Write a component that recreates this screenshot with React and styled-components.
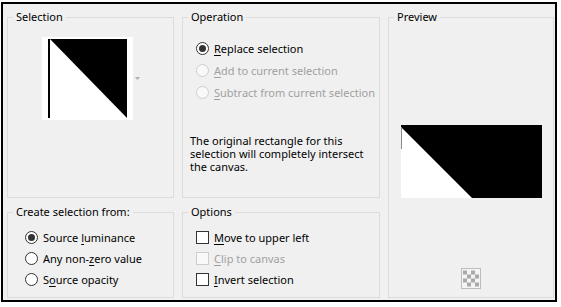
import React from "react";
import styled, { createGlobalStyle } from "styled-components";

const GlobalStyle = createGlobalStyle`
  html, body {
    margin: 0;
    padding: 0;
    background: #fff;
  }
  body {
    font-family: "Segoe UI", "Noto Sans", sans-serif;
    font-size: 11px;
    color: #000;
  }
`;

export const Dialog = styled.div`
  box-sizing: border-box;
  width: 556px;
  height: 300px;
  margin: 2px 0 0 1px;
  padding: 5px 2px 0 4px;
  border: 2px solid #000;
  background: #f0f0f0;
  display: grid;
  grid-template-columns: 167px 198px 166px;
  grid-template-rows: 189px 94px;
  column-gap: 8px;
  row-gap: 6px;
`;

export const Group = styled.fieldset`
  margin: 0;
  padding: 0;
  min-width: 0;
  border: 1px solid #dcdcdc;
  display: flex;
  flex-direction: column;
  grid-column: ${(p) => p.$col};
  grid-row: ${(p) => p.$row};
`;

export const Legend = styled.legend`
  margin-left: 5px;
  padding: 0 3px;
  line-height: 16px;
`;

export const ThumbRow = styled.div`
  display: flex;
  align-items: center;
  padding: 12px 0 0 34px;
`;

export const Thumb = styled.div`
  width: 79px;
  height: 79px;
  padding: 2px 6px;
  background: #fff;
  display: flex;
`;

export const DropArrow = styled.svg`
  margin-left: 2px;
  width: 5px;
  height: 3px;
`;

export const List = styled.div`
  display: flex;
  flex-direction: column;
  padding: ${(p) => p.$pad};
`;

export const Row = styled.label`
  display: flex;
  align-items: center;
  gap: 5px;
  height: ${(p) => p.$h}px;
  color: ${(p) => (p.$disabled ? "#a0a0a0" : "#000")};
  white-space: nowrap;
`;

export const Radio = styled.span`
  box-sizing: border-box;
  width: 13px;
  height: 13px;
  border-radius: 50%;
  border: 1px solid ${(p) => (p.$disabled ? "#cdcdcd" : "#333")};
  background: ${(p) => (p.$disabled ? "#f9f9f9" : "#fff")};
  display: flex;
  align-items: center;
  justify-content: center;
  flex: none;

  &::after {
    content: "";
    display: ${(p) => (p.$checked ? "block" : "none")};
    width: 7px;
    height: 7px;
    border-radius: 50%;
    background: #333;
  }
`;

export const Check = styled.span`
  box-sizing: border-box;
  width: 13px;
  height: 13px;
  border: 1px solid ${(p) => (p.$disabled ? "#cdcdcd" : "#333")};
  background: ${(p) => (p.$disabled ? "#f9f9f9" : "#fff")};
  flex: none;
`;

export const Key = styled.span`
  text-decoration: underline;
  text-underline-offset: 2px;
`;

export const Note = styled.p`
  margin: 31px 0 0 7px;
  line-height: 13px;
  white-space: nowrap;
`;

export const PreviewBody = styled.div`
  flex: 1;
  display: flex;
  flex-direction: column;
  align-items: center;
  padding-bottom: 8px;
`;

export const PreviewImage = styled.svg`
  margin-top: 100px;
  width: 141px;
  height: 73px;
  display: block;
`;

export const CheckerButton = styled.svg`
  margin-top: auto;
  width: 20px;
  height: 21px;
  display: block;
`;

const label = (text, key) => {
  const i = text.indexOf(key);
  return (
    <span>
      {text.slice(0, i)}
      <Key>{key}</Key>
      {text.slice(i + key.length)}
    </span>
  );
};

const Checker = () => {
  const cells = [];
  for (let r = 0; r < 4; r++)
    for (let c = 0; c < 4; c++)
      if ((r + c) % 2 === 0)
        cells.push(<rect key={r + "-" + c} x={2 + c * 4} y={2.5 + r * 4} width="4" height="4" fill="#a9a9a9" />);
  return (
    <CheckerButton viewBox="0 0 20 21">
      <rect x="0.5" y="0.5" width="19" height="20" fill="#f4f4f4" stroke="#bcbcbc" />
      {cells}
    </CheckerButton>
  );
};

export default function App() {
  return (
    <>
      <GlobalStyle />
      <Dialog>
        <Group $col="1" $row="1">
          <Legend>Selection</Legend>
          <ThumbRow>
            <Thumb>
              <svg width="79" height="79" viewBox="0 0 79 79">
                <rect width="79" height="79" fill="#fff" />
                <rect x="0" y="0" width="2" height="79" fill="#000" />
                <polygon points="2,0 79,0 79,79" fill="#000" />
              </svg>
            </Thumb>
            <DropArrow viewBox="0 0 5 3">
              <polygon points="0,0 5,0 2.5,3" fill="#b0b0b0" />
            </DropArrow>
          </ThumbRow>
        </Group>

        <Group $col="2" $row="1">
          <Legend>Operation</Legend>
          <List $pad="12px 0 0 13px">
            <Row $h={22}>
              <Radio $checked />
              {label("Replace selection", "R")}
            </Row>
            <Row $h={22} $disabled>
              <Radio $disabled />
              {label("Add to current selection", "A")}
            </Row>
            <Row $h={22} $disabled>
              <Radio $disabled />
              {label("Subtract from current selection", "S")}
            </Row>
          </List>
          <Note>
            The original rectangle for this
            <br />
            selection will completely intersect
            <br />
            the canvas.
          </Note>
        </Group>

        <Group $col="3" $row="1 / 3">
          <Legend>Preview</Legend>
          <PreviewBody>
            <PreviewImage viewBox="0 0 141 73">
              <rect width="141" height="73" fill="#000" />
              <polygon points="0,2 0,73 71,73" fill="#fff" />
              <rect x="0" y="2" width="1" height="22" fill="#8a8a8a" />
            </PreviewImage>
            <Checker />
          </PreviewBody>
        </Group>

        <Group $col="1" $row="2">
          <Legend>Create selection from:</Legend>
          <List $pad="7px 0 0 17px">
            <Row $h={21}>
              <Radio $checked />
              {label("Source luminance", "l")}
            </Row>
            <Row $h={21}>
              <Radio />
              {label("Any non-zero value", "z")}
            </Row>
            <Row $h={21}>
              <Radio />
              <span>
                S<Key>o</Key>urce opacity
              </span>
            </Row>
          </List>
        </Group>

        <Group $col="2" $row="2">
          <Legend>Options</Legend>
          <List $pad="7px 0 0 13px">
            <Row $h={21}>
              <Check />
              {label("Move to upper left", "M")}
            </Row>
            <Row $h={21} $disabled>
              <Check $disabled />
              {label("Clip to canvas", "C")}
            </Row>
            <Row $h={21}>
              <Check />
              {label("Invert selection", "I")}
            </Row>
          </List>
        </Group>
      </Dialog>
    </>
  );
}
